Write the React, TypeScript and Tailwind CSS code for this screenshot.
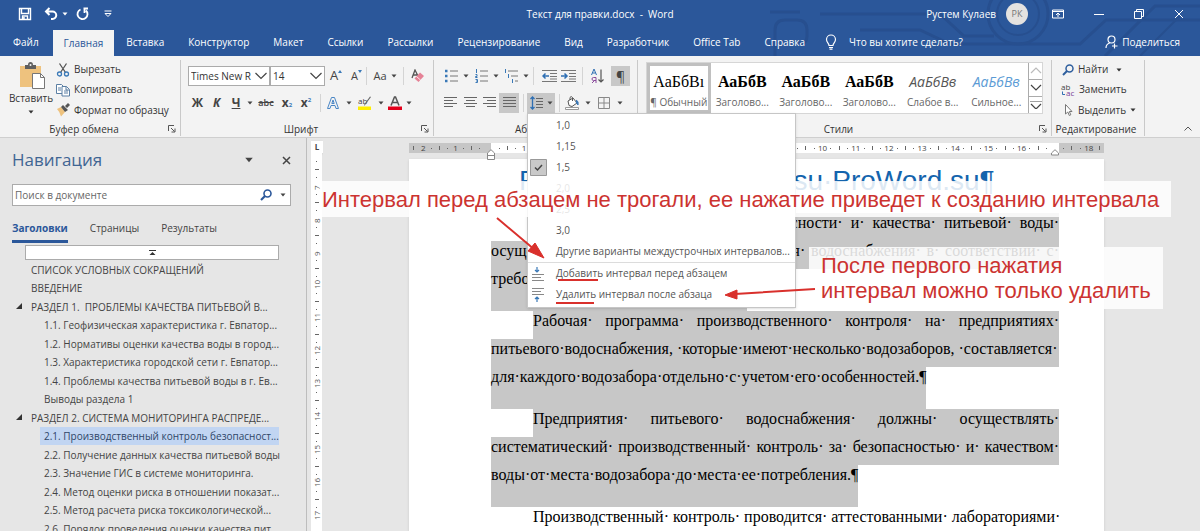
import React from "react";

type Kids = { children?: React.ReactNode };

const Caret = ({ className = "h-1 w-1.5" }: { className?: string }) => (
  <svg viewBox="0 0 6 4" className={"shrink-0 " + className} fill="currentColor">
    <path d="M0.5 0.5h5L3 3.5z" />
  </svg>
);

const Btn = ({ w, label, children, className = "" }: Kids & { w: string; label: string; className?: string }) => (
  <button aria-label={label} className={"flex h-5 shrink-0 items-center justify-center text-[#444] " + w + " " + className}>
    {children}
  </button>
);

const Sep = () => <span className="h-[18px] w-px shrink-0 bg-[#d4d4d4]" />;

const Launcher = () => (
  <svg viewBox="0 0 8 8" className="size-2 text-[#555]" fill="none" stroke="currentColor">
    <path d="M0.5 6V0.5H6M3 3l3.5 3.5M7 3.5V7H3.5" />
  </svg>
);

function Group({ title, className = "", launcher = true, children }: Kids & { title: string; className?: string; launcher?: boolean }) {
  return (
    <section className={"mt-1 mb-px flex flex-col border-r border-[#c9c9c9] " + className}>
      <div className="flex-1">{children}</div>
      <footer className="flex h-3.5 shrink-0 items-center pr-1 text-[10px] leading-3 text-[#333]">
        <span className="flex-1 text-center">{title}</span>
        {launcher && (
          <button aria-label={"Параметры: " + title}>
            <Launcher />
          </button>
        )}
      </footer>
    </section>
  );
}

const tabs = ["Вставка", "Конструктор", "Макет", "Ссылки", "Рассылки", "Рецензирование", "Вид", "Разработчик", "Office Tab", "Справка"];

function Header() {
  return (
    <header className="relative h-14 shrink-0 bg-[#2b579a] text-[10px] text-white">
      <svg className="absolute top-0 right-0 h-14 w-[440px]" viewBox="0 0 440 56" fill="none" stroke="#274f8f" strokeWidth="3">
        <path d="M10 12h30M15 56V30q0-10 10-10h12q10 0 10 10v6q0 8-8 8M60 14h120l24 22h30M100 30h60l30 14h130l26-24h94M345 56l50-50h45" />
        <circle cx="258" cy="14" r="30" />
        <circle cx="258" cy="14" r="21" strokeWidth="2" />
        <path d="M380 56l40-40" strokeWidth="2" />
      </svg>
      <div className="relative flex h-7 items-center">
        <div className="flex flex-1 items-center">
          <button aria-label="Сохранить" className="ml-[18px] w-[26px]">
            <svg viewBox="0 0 14 14" className="size-3.5" fill="none" stroke="white" strokeWidth="1.4">
              <path d="M1.5 1.5h11v11h-11zM3.5 2v4.5h7V2M4.5 12.500V9h5v3.500M6 10v2" />
            </svg>
          </button>
          <button aria-label="Отменить" className="flex w-8 items-center gap-1">
            <svg viewBox="0 0 14 14" className="size-3.5" fill="none" stroke="white" strokeWidth="2">
              <path d="M5.500 1L2 4.500l3.500 3.500M2 4.500h6.500a3.500 3.500 0 010 7.500H7" />
            </svg>
            <Caret />
          </button>
          <button aria-label="Повторить" className="w-7">
            <svg viewBox="0 0 14 14" className="size-3.5" fill="none" stroke="white" strokeWidth="1.800">
              <path d="M4.500 2.500a5 5 0 105.500 1M7.500 1.500h4.500M8.500 1.500v4.500" />
            </svg>
          </button>
          <button aria-label="Настройка панели" className="w-4">
            <svg viewBox="0 0 8 8" className="size-2" fill="none" stroke="white">
              <path d="M0.500 1h7M1 3.500h6L4 6.500z" />
            </svg>
          </button>
        </div>
        <h1 className="whitespace-pre">Текст для правки.docx  -  Word</h1>
        <div className="flex flex-1 items-center justify-end">
          <span>Рустем Кулаев</span>
          <span className="mr-6 ml-2.5 flex size-[22px] items-center justify-center rounded-full bg-[#e4e2e0] text-[9px] text-[#777]">РК</span>
          <button aria-label="Параметры ленты" className="w-[42px]">
            <svg viewBox="0 0 12 10" className="h-2.5 w-3" fill="none" stroke="white">
              <path d="M0.500 1h11v8h-11zM0.500 2.500h11M6 8V4.500M4 6l2-2 2 2" />
            </svg>
          </button>
          <button aria-label="Свернуть" className="w-10">
            <svg viewBox="0 0 10 10" className="size-2.5" stroke="white"><path d="M0 5.500h10" /></svg>
          </button>
          <button aria-label="Окно" className="w-10">
            <svg viewBox="0 0 10 10" className="size-2.5" fill="none" stroke="white"><path d="M0.500 2.500h7v7h-7zM2.500 2.500v-2h7v7h-2" /></svg>
          </button>
          <button aria-label="Закрыть" className="w-[26px]">
            <svg viewBox="0 0 10 10" className="size-2.5" fill="none" stroke="white"><path d="M1 1l8 8M9 1L1 9" /></svg>
          </button>
        </div>
      </div>
      <nav className="relative flex h-7 items-center">
        <button className="h-full pr-3.5 pl-[13px]">Файл</button>
        <button className="mt-0.5 h-[26px] bg-[#f3f3f3] px-[11px] text-[#2b579a]">Главная</button>
        {tabs.map((t) => (
          <button key={t} className="h-full px-3">{t}</button>
        ))}
        <button className="ml-2 flex items-center gap-3">
          <svg viewBox="0 0 12 16" className="h-4 w-3" fill="none" stroke="white" strokeWidth="1.200">
            <path d="M4 11.500C4 9 1.500 8.500 1.500 5.500a4.500 4.500 0 019 0c0 3-2.500 3.500-2.500 6zM4 13.500h4M4.500 15.200h3" />
          </svg>
          Что вы хотите сделать?
        </button>
        <button className="mr-5 ml-auto flex items-center gap-1">
          <svg viewBox="0 0 13 14" className="h-3.5 w-[13px]" fill="none" stroke="white" strokeWidth="1.200">
            <circle cx="6.500" cy="4.500" r="3.500" />
            <path d="M1 13q0-4 4-5.300M9.500 8.500v5M7 11h5.500" />
          </svg>
          Поделиться
        </button>
      </nav>
    </header>
  );
}

function Clipboard() {
  return (
    <Group title="Буфер обмена" className="w-[181px]">
      <div className="flex pl-2">
        <button className="flex w-[46px] flex-col items-center pt-0.5 text-[10px] leading-4 text-[#333]">
          <svg viewBox="0 0 26 28" className="ml-1 h-7 w-[26px]">
            <path d="M0 4h21v21H0z" fill="#eec27e" />
            <path d="M5 7V3h3q0-3 2.500-3T13 3h3v4z" fill="#5f5f5f" />
            <circle cx="10.500" cy="3" r="1" fill="#f3f3f3" />
            <path d="M12.500 11.500h8l4 4v11h-12z" fill="white" stroke="#777" />
            <path d="M20.500 11.500v4h4" fill="none" stroke="#777" />
          </svg>
          <span>Вставить</span>
          <Caret className="mt-1 h-1 w-1.5" />
        </button>
        <div className="ml-0.5 flex flex-col text-[10px] text-[#333]">
          <button className="flex h-[19px] items-center gap-1">
            <svg viewBox="0 0 14 14" className="size-3.5" fill="none" strokeWidth="1.300">
              <path d="M3.500 0.500l6 9M10.500 0.500l-6 9" stroke="#555" />
              <circle cx="3.500" cy="11" r="2" stroke="#3a79b7" />
              <circle cx="10.500" cy="11" r="2" stroke="#3a79b7" />
            </svg>
            Вырезать
          </button>
          <button className="flex h-[21px] items-center gap-1">
            <svg viewBox="0 0 14 14" className="size-3.5" fill="#fff" stroke="#5b7fa3">
              <path d="M0.500 1.500h5l2 2v7h-7zM2 5h3M2 7h3" />
              <path d="M6 3.500h4.500l3 3v6.500H6zM8 8h4M8 10h4M10 3.500v3.500h3" />
            </svg>
            Копировать
          </button>
          <button className="flex h-5 items-center gap-1">
            <svg viewBox="0 0 14 14" className="size-3.5">
              <path d="M1 6l4-2 4 5-4 4.500Q4 9 1 6z" fill="#eec27e" />
              <path d="M5 4l2-2 5 5-3 2zM9 3l3-3 2 2-3 3z" fill="#555" />
            </svg>
            Формат по образцу
          </button>
        </div>
      </div>
    </Group>
  );
}

function Combo({ value, label, w }: { value: string; label: string; w: string }) {
  return (
    <label className={"relative flex h-5 border border-[#ababab] bg-white " + w}>
      <select aria-label={label} defaultValue={value} className="w-full appearance-none bg-transparent pl-0.5 text-[10px] text-[#333] outline-none">
        <option>{value}</option>
      </select>
      <svg viewBox="0 0 12 8" className="pointer-events-none absolute top-[5px] right-0.5 h-2 w-3" fill="none" stroke="#444" strokeWidth="1.200">
        <path d="M0.500 1L6 6.500 11.500 1" />
      </svg>
    </label>
  );
}

function FontGroup() {
  return (
    <Group title="Шрифт" className="w-[253px]">
      <div className="flex items-center pt-1.5 pl-[7px]">
        <Combo value="Times New R" label="Шрифт" w="w-[82px]" />
        <Combo value="14" label="Размер" w="w-[55px]" />
        <Btn w="w-[22px]" label="Увеличить размер" className="text-[13px]">
          А<svg viewBox="0 0 4 4" className="mb-2 size-1"><path d="M2 0l2 3H0z" fill="#3a79b7" /></svg>
        </Btn>
        <Btn w="w-[19px]" label="Уменьшить размер" className="text-[11px]">
          А<svg viewBox="0 0 4 4" className="mb-2 size-1"><path d="M2 3l2-3H0z" fill="#3a79b7" /></svg>
        </Btn>
        <Sep />
        <Btn w="w-9" label="Регистр" className="gap-1 text-[11px]">Аа <Caret /></Btn>
        <Sep />
        <Btn w="w-7" label="Очистить форматирование">
          <svg viewBox="0 0 14 14" className="size-3.5">
            <path d="M1 9l3-8 3 6M2 6h4" fill="none" stroke="#555" strokeWidth="1.300" />
            <path d="M9 3.500l4 3.500-5.500 6-4-3.500z" fill="#e58296" />
            <path d="M5.500 7.500l4 3.500" stroke="#fff" strokeWidth=".8" />
          </svg>
        </Btn>
      </div>
      <div className="mt-[7px] flex items-center pl-[7px] text-[12px]">
        <Btn w="w-[19px]" label="Полужирный" className="font-bold">Ж</Btn>
        <Btn w="w-[19px]" label="Курсив" className="font-bold italic">К</Btn>
        <Btn w="w-5" label="Подчеркнутый" className="font-bold underline">Ч</Btn>
        <Btn w="w-2" label="Вид подчеркивания"><Caret /></Btn>
        <Btn w="w-6" label="Зачеркнутый" className="text-[9px] font-semibold line-through">abc</Btn>
        <Btn w="w-[18px]" label="Подстрочный" className="font-bold">x<sub className="text-[6px] text-[#3a79b7]">2</sub></Btn>
        <Btn w="w-5" label="Надстрочный" className="font-bold">x<sup className="text-[6px] text-[#3a79b7]">2</sup></Btn>
        <span className="w-1" />
        <Sep />
        <Btn w="w-6" label="Эффекты">
          <svg viewBox="0 0 12 12" className="size-3 " fill="none" stroke="#4a86c5">
            <path d="M0.500 11.500L4.500 0.500h3l4 11H9l-1-3H4l-1 3zM4.800 6.500h2.400L6 3z" />
          </svg>
        </Btn>
        <Btn w="w-2" label="Меню эффектов"><Caret /></Btn>
        <Btn w="w-6" label="Цвет выделения">
          <svg viewBox="0 0 14 14" className="size-3.5">
            <text x="0" y="8" fontSize="8" fill="#444">ab</text>
            <path d="M13 1L7 9l-1 1 .5-2L12 0.500z" fill="#666" />
            <path d="M0 10.500h13V14H0z" fill="#ffee00" />
          </svg>
        </Btn>
        <Btn w="w-2" label="Меню выделения"><Caret /></Btn>
        <Btn w="w-5" label="Цвет текста">
          <svg viewBox="0 0 14 14" className="size-3.5">
            <path d="M3 9.500L6.500 1h1L11 9.500M4.500 6.500h5" fill="none" stroke="#555" strokeWidth="1.500" />
            <path d="M0 10.500h14V14H0z" fill="#e3001b" />
          </svg>
        </Btn>
        <Btn w="w-2" label="Меню цвета"><Caret /></Btn>
      </div>
    </Group>
  );
}

const AlignIcon = ({ d }: { d: string }) => (
  <svg viewBox="0 0 13 12" className="h-3 w-[13px]" stroke="#666" fill="none"><path d={d} /></svg>
);

const menuValues = ["1,0", "1,15", "1,5", "2,0", "2,5", "3,0"];

function SpacingMenu() {
  return (
    <div role="menu" className="absolute top-5 left-0 z-20 w-[269px] border border-[#c6c6c6] bg-white pt-px pb-0.5 text-[10px] text-[#555] shadow-sm">
      {menuValues.map((v) => (
        <button key={v} role="menuitem" className="flex h-[21px] w-full items-center">
          <span className="flex w-7 items-center pl-0.5">
            {v === "1,5" && (
              <svg viewBox="0 0 17 17" className="size-[17px]" fill="#c9c9c9" stroke="#999">
                <path d="M0.500 0.500h16v16h-16z" />
                <path d="M5 8.500l2.500 2.500 4.500-5" fill="none" stroke="#444" strokeWidth="1.500" />
              </svg>
            )}
          </span>
          <span>{v}</span>
        </button>
      ))}
      <button role="menuitem" className="flex h-[21px] w-full items-center pl-7 whitespace-nowrap">Другие варианты междустрочных интервалов...</button>
      <hr className="border-[#dcdcdc]" />
      <button role="menuitem" className="relative flex h-[21px] w-full items-center">
        <span className="w-7 pl-1">
          <svg viewBox="0 0 12 14" className="h-3.5 w-3" fill="none" stroke="#888">
            <path d="M0 7.500h12M0 10.500h9M0 13.500h12" />
            <path d="M5 0v5M3 3l2 2 2-2" stroke="#3a79b7" strokeWidth="1.200" />
          </svg>
        </span>
        Добавить интервал перед абзацем
        <span className="absolute bottom-[3px] left-[30px] h-0.5 w-10 bg-[#d9302c]" />
      </button>
      <button role="menuitem" className="relative flex h-[21px] w-full items-center">
        <span className="w-7 pl-1">
          <svg viewBox="0 0 12 14" className="h-3.5 w-3" fill="none" stroke="#888">
            <path d="M0 0.500h12M0 3.500h9M0 6.500h12" />
            <path d="M5 14V9M3 11l2-2 2 2" stroke="#3a79b7" strokeWidth="1.200" />
          </svg>
        </span>
        Удалить интервал после абзаца
        <span className="absolute bottom-px left-7 h-0.5 w-[38px] bg-[#d9302c]" />
      </button>
    </div>
  );
}

function ParagraphGroup() {
  return (
    <Group title="Абзац" className="w-[204px]">
      <div className="flex items-center pt-1.5 pl-1.5">
        <Btn w="w-[22px]" label="Маркеры">
          <svg viewBox="0 0 13 14" className="h-3.5 w-[13px]" stroke="#777">
            <path d="M5 2h8M5 7h8M5 12h8" />
            <path d="M0 2h2.500M0 7h2.500M0 12h2.500" stroke="#3a79b7" strokeWidth="2.500" />
          </svg>
        </Btn>
        <Btn w="w-2" label="Меню маркеров"><Caret /></Btn>
        <Btn w="w-[22px]" label="Нумерация">
          <svg viewBox="0 0 13 14" className="h-3.5 w-[13px]" stroke="#777">
            <path d="M5 2h8M5 7h8M5 12h8" />
            <path d="M1.500 0v4M0.500 5.500h1.500v2H0.500v1h2M0.500 10.500h2v3h-2M1 12h1" stroke="#3a79b7" fill="none" />
          </svg>
        </Btn>
        <Btn w="w-2" label="Меню нумерации"><Caret /></Btn>
        <Btn w="w-[22px]" label="Многоуровневый список">
          <svg viewBox="0 0 14 14" className="size-3.5" stroke="#777">
            <path d="M4 2h10M7 7h7M11 12h3" />
            <path d="M1.500 0v4M4.500 5v4M8.500 10v4" stroke="#3a79b7" />
          </svg>
        </Btn>
        <Btn w="w-2" label="Меню списка"><Caret /></Btn>
        <span className="w-[3px]" />
        <Sep />
        <span className="w-1.5" />
        <Btn w="w-[19px]" label="Уменьшить отступ">
          <svg viewBox="0 0 15 12" className="h-3 w-[15px]" stroke="#777" fill="none">
            <path d="M0 0.500h15M8 3.500h7M8 6.500h7M8 9h7M0 11.500h15" />
            <path d="M7 6H1M3.500 3.500L1 6l2.500 2.500" stroke="#2f6fb3" strokeWidth="1.500" />
          </svg>
        </Btn>
        <Btn w="w-[19px]" label="Увеличить отступ">
          <svg viewBox="0 0 15 12" className="h-3 w-[15px]" stroke="#777" fill="none">
            <path d="M0 0.500h15M8 3.500h7M8 6.500h7M8 9h7M0 11.500h15" />
            <path d="M0 6h6M3.500 3.500L6 6 3.500 8.500" stroke="#2f6fb3" strokeWidth="1.500" />
          </svg>
        </Btn>
        <span className="w-1" />
        <Sep />
        <Btn w="w-7" label="Сортировка">
          <svg viewBox="0 0 13 14" className="h-3.5 w-[13px]" fill="none">
            <path d="M0.500 6l2.500-6 2.500 6M1.500 4h3" stroke="#2f6fb3" />
            <path d="M5 14V8.500H2.500a1.300 1.300 0 000 3H5M3.500 11.500L1 14" stroke="#8a4a9c" />
            <path d="M10 0.500v12.500M7.500 10.500l2.500 2.500 2.500-2.500" stroke="#555" strokeWidth="1.200" />
          </svg>
        </Btn>
        <Btn w="w-[19px]" label="Непечатаемые знаки" className="bg-[#c8c8c8] text-[14px]">¶</Btn>
      </div>
      <div className="relative mt-[7px] flex items-center pl-1.5">
        <Btn w="w-5" label="По левому краю"><AlignIcon d="M0 0.500h13M0 3.500h9M0 6.500h13M0 9.500h9" /></Btn>
        <Btn w="w-5" label="По центру"><AlignIcon d="M0 0.500h13M2 3.500h9M0 6.500h13M2 9.500h9" /></Btn>
        <Btn w="w-[19px]" label="По правому краю"><AlignIcon d="M0 0.500h13M4 3.500h9M0 6.500h13M4 9.500h9" /></Btn>
        <Btn w="w-5" label="По ширине" className="bg-[#c8c8c8]"><AlignIcon d="M0 0.500h13M0 3.500h13M0 6.500h13M0 9.500h13" /></Btn>
        <span className="w-1" />
        <Sep />
        <span className="w-[3px]" />
        <div className="relative">
          <Btn w="w-7" label="Интервал" className="gap-1 bg-[#c8c8c8]">
            <svg viewBox="0 0 13 14" className="h-3.5 w-[13px]" fill="none">
              <path d="M6 2.500h7M6 5.500h7M6 8.500h7M6 11.500h7" stroke="#666" />
              <path d="M2.500 1v12M0.500 3l2-2 2 2M0.500 11l2 2 2-2" stroke="#2f6fb3" strokeWidth="1.300" />
            </svg>
            <Caret />
          </Btn>
          <SpacingMenu />
        </div>
        <span className="w-1" />
        <Sep />
        <Btn w="w-6" label="Заливка">
          <svg viewBox="0 0 15 14" className="h-3.5 w-[15px]" fill="none" stroke="#555">
            <path d="M3 5l5-3 4 5-5 3.500-3-1zM5 4V1.500q1-2 2.500 0V5" fill="#fff" />
            <path d="M11 4q3 1 2 5l-2-3" fill="#3a79b7" stroke="#3a79b7" />
            <path d="M0.500 11.500h13v2H0.500z" fill="#fff" stroke="#999" />
          </svg>
        </Btn>
        <Btn w="w-2" label="Меню заливки"><Caret /></Btn>
        <Btn w="w-6" label="Границы">
          <svg viewBox="0 0 12 12" className="size-3" fill="none" stroke="#888">
            <path d="M0.500 0.500h11v11H0.500zM6 0.500v11M0.500 6h11" />
          </svg>
        </Btn>
        <Btn w="w-2" label="Меню границ"><Caret /></Btn>
      </div>
    </Group>
  );
}

const styles = [
  { s: "АаБбВı", n: "¶ Обычный", c: "font-['Liberation_Serif',serif] text-[16px] text-black" },
  { s: "АаБбВ", n: "Заголово...", c: "font-['Liberation_Serif',serif] text-[16px] font-bold text-black" },
  { s: "АаБбВ", n: "Заголово...", c: "font-['Liberation_Serif',serif] text-[16px] font-bold text-black" },
  { s: "АаБбВ", n: "Заголово...", c: "font-['Liberation_Serif',serif] text-[16px] font-bold text-black" },
  { s: "АаБбВв", n: "Слабое в...", c: "text-[14px] italic text-[#555]" },
  { s: "АаБбВв", n: "Сильное...", c: "text-[14px] italic text-[#5b9bd5]" },
];

function StylesGroup() {
  return (
    <Group title="Стили" className="min-w-0 flex-1">
      <div className="mt-0.5 mr-2 ml-2 flex h-[52px] border border-[#d6d6d6] bg-white">
        {styles.map((s, i) => (
          <button
            key={i}
            className={"flex min-w-0 flex-1 flex-col items-center justify-end overflow-hidden whitespace-nowrap " + (i === 0 ? "border-3 border-[#c0c0c0]" : "border-3 border-transparent")}
          >
            <span className={"leading-5 " + s.c}>{s.s}</span>
            <span className="mt-0.5 text-[10px] leading-4 text-[#666]">{s.n}</span>
          </button>
        ))}
        <div className="flex w-3.5 flex-col divide-y divide-[#ababab] border-l border-[#ababab]">
          {["M1 6l5-5 5 5", "M1 1l5 5 5-5", "M0 0h12M1 3l5 5 5-5"].map((d, i) => (
            <button key={i} aria-label="Прокрутка стилей" className={"flex flex-1 items-center justify-center " + (i ? "text-[#444]" : "text-[#bbb]")}>
              <svg viewBox="0 0 12 8" className="h-2 w-3" fill="none" stroke="currentColor" strokeWidth="1.200"><path d={d} /></svg>
            </button>
          ))}
        </div>
      </div>
    </Group>
  );
}

function EditingGroup() {
  return (
    <Group title="Редактирование" launcher={false} className="w-[93px]">
      <div className="flex flex-col pl-2.5 text-[10px] text-[#333]">
        <button className="flex h-[19px] items-center gap-1">
          <svg viewBox="0 0 12 12" className="size-3" fill="none" stroke="#2f5f9e" strokeWidth="1.500">
            <circle cx="7.500" cy="4.500" r="3.500" /><path d="M5 7l-4 4" strokeWidth="2" />
          </svg>
          Найти <Caret className="ml-1 h-1 w-1.5" />
        </button>
        <button className="flex h-[21px] items-center gap-1">
          <svg viewBox="0 0 14 14" className="-ml-px h-3.5 w-3.5 overflow-visible">
            <text x="0" y="7" fontSize="8" fill="#444">ab</text>
            <text x="5" y="13" fontSize="8" fill="#7a3f98">ac</text>
            <path d="M1.500 8.500v3h2.500" fill="none" stroke="#2f6fb3" />
          </svg>
          Заменить
        </button>
        <button className="flex h-5 items-center gap-1">
          <svg viewBox="0 0 12 12" className="size-3" fill="white" stroke="#777">
            <path d="M3.500 0.500v9.500l2.300-2 1.500 3.500 1.500-.7-1.500-3.300h2.700z" />
          </svg>
          Выделить<Caret />
        </button>
      </div>
    </Group>
  );
}

const nav = [
  { t: "СПИСОК УСЛОВНЫХ СОКРАЩЕНИЙ", l: 1 },
  { t: "ВВЕДЕНИЕ", l: 1 },
  { t: "РАЗДЕЛ 1.  ПРОБЛЕМЫ КАЧЕСТВА ПИТЬЕВОЙ В...", l: 1, open: true },
  { t: "1.1. Геофизическая характеристика г. Евпатор...", l: 2 },
  { t: "1.2. Нормативы оценки качества воды в город...", l: 2 },
  { t: "1.3. Характеристика городской сети г. Евпатор...", l: 2 },
  { t: "1.4. Проблемы качества питьевой воды в г. Ев...", l: 2 },
  { t: "Выводы раздела 1", l: 2 },
  { t: "РАЗДЕЛ 2. СИСТЕМА МОНИТОРИНГА РАСПРЕДЕ...", l: 1, open: true },
  { t: "2.1. Производственный контроль безопасност...", l: 2, active: true },
  { t: "2.2. Получение данных качества питьевой воды", l: 2 },
  { t: "2.3. Значение ГИС в системе мониторинга.", l: 2 },
  { t: "2.4. Метод оценки риска в отношении показат...", l: 2 },
  { t: "2.5. Метод расчета риска токсикологической...", l: 2 },
  { t: "2.6. Порядок проведения оценки качества пит...", l: 2 },
];

function NavPane() {
  return (
    <aside className="flex w-[307px] shrink-0 flex-col overflow-hidden border-r border-[#bdbdbd] pl-3 text-[10px] text-[#444]">
      <div className="flex items-center pt-2.5 pr-[15px]">
        <h2 className="flex-1 text-[17px] leading-6 text-[#3f6593]">Навигация</h2>
        <button aria-label="Параметры панели" className="mr-7"><Caret className="h-1.5 w-2.5" /></button>
        <button aria-label="Закрыть панель">
          <svg viewBox="0 0 9 9" className="size-[9px]" stroke="#444" strokeWidth="1.500"><path d="M1 1l7 7M8 1L1 8" /></svg>
        </button>
      </div>
      <label className="mt-3 mr-[15px] flex h-[22px] shrink-0 items-center border border-[#ababab] bg-white pr-1">
        <input aria-label="Поиск в документе" placeholder="Поиск в документе" className="min-w-0 flex-1 bg-transparent pl-0.5 outline-none placeholder:text-[#666]" />
        <svg viewBox="0 0 12 12" className="mr-2 size-3" fill="none" stroke="#2b579a" strokeWidth="1.600">
          <circle cx="7.500" cy="4.500" r="3.500" /><path d="M5 7l-4 4" strokeWidth="2.200" />
        </svg>
        <Caret />
      </label>
      <div className="mt-3.5 flex shrink-0 gap-[22px] leading-4">
        <button className="border-b-3 border-[#2b579a] pb-1 font-bold text-[#2b579a]">Заголовки</button>
        <button className="pb-[7px]">Страницы</button>
        <button className="pb-[7px]">Результаты</button>
      </div>
      <button aria-label="К началу" className="mt-0.5 mr-[27px] mb-px ml-[13px] flex h-[15px] shrink-0 items-center justify-center border border-[#ababab] bg-white">
        <svg viewBox="0 0 7 6" className="h-1.5 w-[7px]" fill="#333"><path d="M0 0h7v1H0zM3.500 2l3 3h-6z" /></svg>
      </button>
      <ul className="mr-[27px] shrink-0">
        {nav.map((n) => (
          <li key={n.t} className="flex leading-[18px] whitespace-pre even:mb-px">
            <span className="w-[15px] shrink-0 pt-[5px] pl-1">
              {n.open && <svg viewBox="0 0 6 6" className="size-1.5" fill="#333"><path d="M6 0v6H0z" /></svg>}
            </span>
            {n.l === 1 ? (
              <a href="#heading" className="pl-1">{n.t}</a>
            ) : (
              <a href="#heading" className={"ml-[13px] flex-1 pl-1 " + (n.active ? "bg-[#c1d5f2] text-[#2f4668]" : "")}>{n.t}</a>
            )}
          </li>
        ))}
      </ul>
    </aside>
  );
}

function VRuler() {
  return (
    <div className="ml-1 flex w-3 shrink-0 flex-col overflow-hidden">
      <button aria-label="Табуляция" className="mt-[3px] flex size-3 shrink-0 items-center justify-center bg-white text-[8px] font-bold text-[#444] shadow-sm">L</button>
      <div className="mr-px flex-1 bg-white pt-1 text-[8px] leading-[11px] text-[#555]">
        {[7, 8, 9, 10, 11, 12, 13, 14, 15, 16, 17].map((n) => (
          <div key={n} className="grid h-[33px] grid-rows-4 place-items-center">
            <span className="size-px bg-[#666]" />
            <span className="h-px w-1 bg-[#666]" />
            <span className="size-px bg-[#666]" />
            <span className="flex h-2 rotate-180 items-center [writing-mode:vertical-rl]">{n}</span>
          </div>
        ))}
      </div>
    </div>
  );
}

const Unit = ({ n }: { n: number | string }) => (
  <div className="grid min-w-0 flex-1 grid-cols-4 place-items-center">
    <span className="size-px bg-[#666]" />
    <span className="h-1 w-px bg-[#666]" />
    <span className="size-px bg-[#666]" />
    <span className="flex w-2 justify-center">{n}</span>
  </div>
);

function HRuler() {
  return (
    <div className="flex h-2.5 text-[8px] leading-[10px] text-[#444]">
      <div className="flex w-[82px] bg-[#c6c6c6]">
        <div className="grid w-[19px] grid-cols-2 place-items-center"><span className="h-1 w-px bg-[#666]" /><span className="flex w-2 justify-center">2</span></div>
        <Unit n={1} />
        <Unit n="" />
      </div>
      <div className="relative flex flex-1 bg-white pl-1">
        <svg viewBox="0 0 8 11" className="absolute top-1.5 -left-1 h-[11px] w-2" fill="white" stroke="#888"><path d="M0.500 4L4 .7 7.500 4v6.500h-7zM0.500 6.500h7" /></svg>
        {Array.from({ length: 16 }, (_, i) => <Unit key={i} n={i + 1} />)}
        <Unit n="" />
        <svg viewBox="0 0 8 7" className="absolute top-1.5 right-0 h-[7px] w-2" fill="white" stroke="#888"><path d="M0.500 6V4L4 .7 7.500 4v2z" /></svg>
      </div>
      <div className="flex w-[45px] bg-[#c6c6c6]"><Unit n={18} /><span className="mr-1 ml-1.5 h-1 w-px self-center bg-[#666]" /></div>
    </div>
  );
}

function Line({ children, indent, loose }: Kids & { indent?: boolean; loose?: boolean }) {
  return (
    <div className={(indent ? "ml-[42px] " : "") + (loose ? "text-justify [text-align-last:justify] " : "") + "bg-[#c7c7c7] pb-2 whitespace-nowrap"}>
      {children}
    </div>
  );
}

const LastLine = ({ children }: Kids) => (
  <div className="w-fit bg-[#c7c7c7] pb-[22px] whitespace-nowrap">{children}</div>
);

function Document() {
  return (
    <main className="flex min-w-0 flex-1 flex-col overflow-hidden pr-24 pl-[86px]">
      <div className="shrink-0 pt-[5px]"><HRuler /></div>
      <article className="mt-1.5 flex-1 bg-white pr-[45px] pl-[82px] font-['Liberation_Serif',serif] text-[16px] leading-5 text-black shadow">
        <h1 className="mb-[14px] pt-1 pl-7 font-['Liberation_Sans',sans-serif] text-[28px] leading-9 whitespace-nowrap text-[#1464ad]">ProWord.su·ProWord.su·ProWord.su¶</h1>
        <Line indent><p className="text-right whitespace-pre">безопасности·  и·  качества·  питьевой·  воды·</p></Line>
        <Line loose>осуществлении· государственного· контроля· водоснабжения· в· соответствии· с·</Line>
        <LastLine>требованиями·законодательства·РФ.¶</LastLine>
        <Line indent loose>Рабочая· программа· производственного· контроля· на· предприятиях·</Line>
        <Line>питьевого·водоснабжения, ·которые·имеют·несколько·водозаборов, ·составляется·</Line>
        <LastLine>для·каждого·водозабора·отдельно·с·учетом·его·особенностей.¶</LastLine>
        <Line indent loose>Предприятия· питьевого· водоснабжения· должны· осуществлять·</Line>
        <Line loose>систематический· производственный· контроль· за· безопасностью· и· качеством·</Line>
        <LastLine>воды·от·места·водозабора·до·места·ее·потребления.¶</LastLine>
        <p className="ml-[42px] text-justify whitespace-nowrap [text-align-last:justify]">Производственный· контроль· проводится· аттестованными· лабораториями·</p>
      </article>
    </main>
  );
}

function Annotations() {
  return (
    <div className="pointer-events-none absolute inset-0 z-30 font-['Liberation_Sans',sans-serif] text-[22px] text-[#cc3330]">
      <p className="absolute top-[43px] left-80 bg-white/85 pt-0.5 pr-3 pl-0.5 leading-[34px] whitespace-nowrap">
        Интервал перед абзацем не трогали, ее нажатие приведет к созданию интервала
      </p>
      <p className="absolute top-[109px] left-[809px] bg-white/85 py-1.5 pr-3 pl-3 leading-[25px] whitespace-nowrap">
        После первого нажатия<br />интервал можно только удалить
      </p>
      <svg className="absolute inset-0 h-full w-full" fill="#d9302c" stroke="#d9302c">
        <path d="M497 80l38 32M815 151l-80 5" strokeWidth="2" fill="none" />
        <path d="M544 120l-16-7 7-8zM725 157l12-5v9z" />
      </svg>
    </div>
  );
}

export default function App() {
  return (
    <div className="flex h-screen flex-col overflow-hidden bg-[#e6e6e6] font-['Open_Sans','Noto_Sans',sans-serif]">
      <Header />
      <div className="flex h-[82px] shrink-0 border-b border-[#cfcfcf] bg-[#f3f3f3]">
        <Clipboard />
        <FontGroup />
        <ParagraphGroup />
        <StylesGroup />
        <EditingGroup />
        <div className="flex w-[55px] items-end justify-end pr-2 pb-1.5">
          <button aria-label="Свернуть ленту">
            <svg viewBox="0 0 8 5" className="h-[5px] w-2" fill="none" stroke="#555"><path d="M0.500 4.500L4 1l3.500 3.500" /></svg>
          </button>
        </div>
      </div>
      <div className="relative flex min-h-0 flex-1">
        <NavPane />
        <VRuler />
        <Document />
        <Annotations />
      </div>
    </div>
  );
}
